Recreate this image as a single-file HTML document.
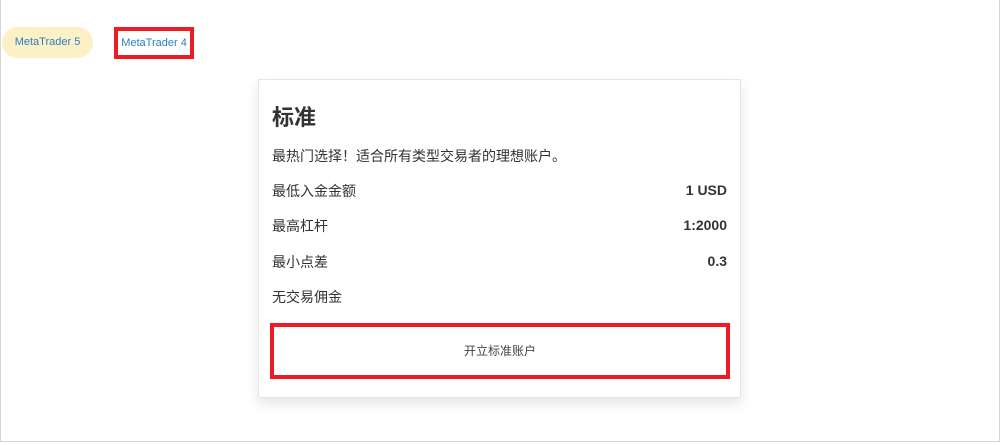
<!DOCTYPE html>
<html><head><meta charset="utf-8"><style>
body{margin:0;width:1000px;height:445px;background:#fff;font-family:"Liberation Sans","Noto Sans CJK SC",sans-serif;position:relative;overflow:hidden}
.frame{position:absolute;left:0;top:0;width:998px;height:441px;border:1px solid #d6d6d6;border-top:none}
.pill{position:absolute;left:2px;top:27px;width:91px;height:31px;border-radius:16px;background:#fcf1c6;color:#2a7fc0;font-size:11px;line-height:31px;text-align:center}
.mt4{position:absolute;left:114px;top:27px;width:72px;height:24px;border:4px solid #ed1c24;color:#2a7fc0;font-size:11px;line-height:24px;text-align:center}
.card{position:absolute;left:258px;top:79px;width:483px;height:319px;border:1px solid #e6e6e6;box-sizing:border-box;box-shadow:0 6px 12px rgba(0,0,0,.1);color:#333}
h1{position:absolute;left:13px;top:20px;margin:0;font-size:22px;font-weight:bold}
.d{position:absolute;left:13px;top:66px;font-size:14px;line-height:20px}
.r{position:absolute;left:13px;right:13px;font-size:14px;line-height:20px}
.r b{position:absolute;right:0;top:-1px}
.btn{position:absolute;left:11px;top:243px;width:452px;height:48px;border:4px solid #ed1c24;text-align:center;line-height:49px;font-size:12px;color:#444}
</style></head><body>
<div class="frame"></div>
<div class="pill">MetaTrader 5</div>
<div class="mt4">MetaTrader 4</div>
<div class="card">
<h1>标准</h1>
<div class="d">最热门选择！适合所有类型交易者的理想账户。</div>
<div class="r" style="top:101px">最低入金金额<b>1 USD</b></div>
<div class="r" style="top:136px">最高杠杆<b>1:2000</b></div>
<div class="r" style="top:172px">最小点差<b>0.3</b></div>
<div class="r" style="top:207px">无交易佣金</div>
<div class="btn">开立标准账户</div>
</div>
</body></html>
